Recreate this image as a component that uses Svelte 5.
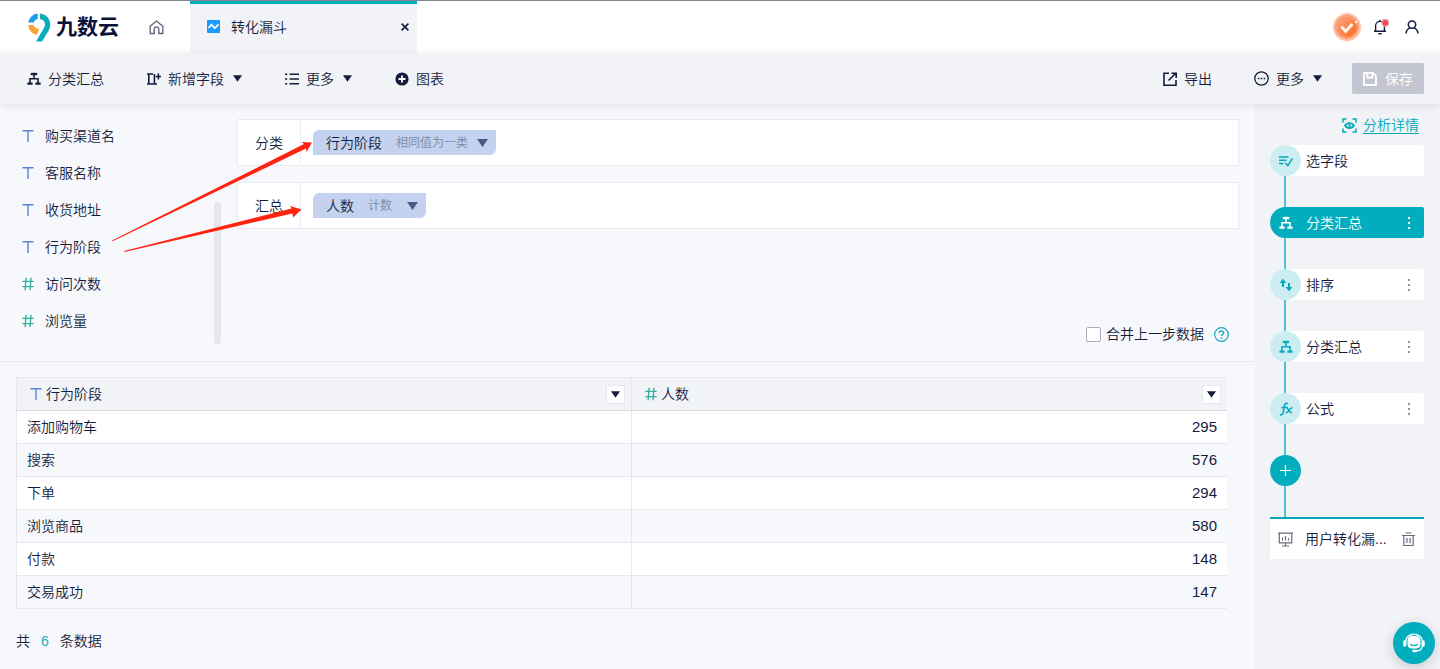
<script>
  const fields = [
    { type: 'text', name: '购买渠道名' },
    { type: 'text', name: '客服名称' },
    { type: 'text', name: '收货地址' },
    { type: 'text', name: '行为阶段' },
    { type: 'number', name: '访问次数' },
    { type: 'number', name: '浏览量' },
  ];
  const rows = [
    ['添加购物车', 295],
    ['搜索', 576],
    ['下单', 294],
    ['浏览商品', 580],
    ['付款', 148],
    ['交易成功', 147],
  ];
  const groups = [
    { label: '分类', name: '行为阶段', mode: '相同值为一类' },
    { label: '汇总', name: '人数', mode: '计数' },
  ];
  const steps = [
    { icon: 'select', name: '选字段', menu: false },
    { icon: 'tree', name: '分类汇总', menu: true, active: true },
    { icon: 'sort', name: '排序', menu: true },
    { icon: 'tree', name: '分类汇总', menu: true },
    { icon: 'fx', name: '公式', menu: true },
  ];
  let merge = $state(false);
</script>

{#snippet caret()}
  <svg class="caret" width="9" height="7" viewBox="0 0 9 7"><path d="M0 .3h9L4.5 6.8z" fill="currentColor" /></svg>
{/snippet}

{#snippet tree()}
  <svg width="14" height="14" viewBox="0 0 14 14" fill="none" stroke="currentColor" stroke-width="1.6">
    <path d="M3.6 2h6.8M7 2v4.5M3 11V6.8h8V11" />
    <path d="M.4 11.7h5.2M8.4 11.7h5.2" stroke-width="2.2" /><path d="M4.3 2h5.4" stroke-width="2.4" />
  </svg>
{/snippet}

{#snippet typeIcon(type)}
  {#if type === 'text'}
    <svg class="type text" width="12" height="14" viewBox="0 0 12 14"><path d="M.5 1.8h11M6 1.8V13" /></svg>
  {:else}
    <svg class="type number" width="12" height="14" viewBox="0 0 12 14"><path d="M.3 4.4h11.4M.3 9.6h11.4M4.1.8l-1 12.4M9 .8l-1 12.4" /></svg>
  {/if}
{/snippet}

<div class="app">
  <header class="top">
    <a class="logo" href="#home">
      <svg width="23" height="29" viewBox="0 0 23 29">
        <path d="M.2 9.6A10.3 10.3 0 0 1 9.7.6v5.5A5 5 0 0 0 5.7 9.6z" fill="#1e9be9" />
        <path d="M.2 12h5.4c.7 2.4 2.6 3.8 5.6 4l-2.6 5.9C3.9 20.8.7 17.2.2 12z" fill="#f7a53b" />
        <path d="M12 .6c6.2.7 10.3 5.2 10.3 11 0 3.3-1.3 5.4-2.6 7.6L14 28.5H8l7.2-12.2c1.1-1.9 1.8-3.2 1.8-5 0-2.5-1.9-4.7-5-5.2z" fill="#0bacb9" />
      </svg>
      <span>九数云</span>
    </a>
    <a class="home" href="#home" aria-label="Home">
      <svg width="15" height="15" viewBox="0 0 15 15" fill="none" stroke="#5b6078" stroke-width="1.3"><path d="M1.2 6.2 7.5 1l6.3 5.2V13.5H9.8V9.2a2.3 2.3 0 0 0-4.6 0v4.3H1.2z" /></svg>
    </a>
    <div class="tab">
      <svg width="13" height="13" viewBox="0 0 13 13"><rect width="13" height="13" rx="1" fill="#1b9bff" /><path d="M1.5 8 4.5 4.5l3.2 3.8L11.500 4.300" fill="none" stroke="#fff" stroke-width="1.7" /></svg>
      <span>转化漏斗</span>
      <button class="close" aria-label="Close">
        <svg width="8" height="8" viewBox="0 0 8 8"><path d="m.6.6 6.8 6.8M7.400.6.6 7.400" stroke="currentColor" stroke-width="1.6" /></svg>
      </button>
    </div>
    <div class="account">
      <svg width="30" height="30" viewBox="0 0 30 30">
        <defs><linearGradient id="medal" x1="0" y1="0" x2="1" y2="1"><stop offset="0" stop-color="#ffa780" /><stop offset="1" stop-color="#f5691f" /></linearGradient></defs>
        <path d="m15 .5 5 1.500 4.500 2.700 3.200 4.300 1.600 5.500-1 5.500-2.800 4.700-4.500 3.300L15 29.500 9 28l-4.500-3.300L1.700 20 .7 14.500 2.300 9l3.200-4.300L10 2z" fill="#fdc6ac" />
        <path d="m15 2.500 4.500 1.200 4 2.600 2.600 4 1.200 4.700-1.200 4.700-2.600 4-4 2.600-4.500 1.200-4.500-1.200-4-2.600-2.600-4L2.700 15l1.200-4.700 2.600-4 4-2.600z" fill="#fb9f78" />
        <circle cx="15" cy="15" r="10" fill="url(#medal)" />
        <path d="m9.5 14.800 4.200 4.400 6.600-7.200" fill="none" stroke="#fff2e9" stroke-width="3" /><circle cx="24" cy="10" r="1.2" fill="#fff" />
      </svg>
      <button aria-label="Notifications">
        <svg width="18" height="18" viewBox="0 0 18 18" fill="none" stroke="#141c3d" stroke-width="1.4">
          <path d="M2 13.200h12M3.600 13V7.800a4.400 4.400 0 0 1 8.800 0V13M8 1.700v1.600M6.300 15.700h3.400" />
          <circle cx="13.3" cy="4.8" r="4" fill="#f6a3a6" stroke="none" /><circle cx="13.3" cy="4.8" r="2.7" fill="#ed4750" stroke="none" />
        </svg>
      </button>
      <button class="user" aria-label="Account">
        <svg width="14" height="14" viewBox="0 0 14 14" fill="none" stroke="#141c3d" stroke-width="1.5"><circle cx="7" cy="4.6" r="3.7" /><path d="M1 13.500c.3-3 1.900-4.900 4-5.600M13 13.500c-.3-3-1.900-4.900-4-5.600" /></svg>
      </button>
    </div>
  </header>

  <nav class="toolbar">
    <button>{@render tree()}分类汇总</button>
    <button>
      <svg width="14" height="14" viewBox="0 0 14 14" fill="none" stroke="currentColor" stroke-width="1.6"><path d="M6 2H1.800v10h5.600V2M0 2h2M0 12h2M8.800 4.500H14M11.400 1.500v6M7 12h3" /></svg>
      新增字段{@render caret()}
    </button>
    <button>
      <svg width="14" height="14" viewBox="0 0 14 14" stroke="currentColor" stroke-width="1.6"><path d="M0 2.300h2.200M0 7h2.200M0 11.700h2.200M4.500 2.300H14M4.500 7H14M4.500 11.700H14" /></svg>
      更多{@render caret()}
    </button>
    <button>
      <svg width="14" height="14" viewBox="0 0 14 14"><circle cx="7" cy="7" r="6.6" fill="currentColor" /><path d="M3.500 7h7M7 3.500v7" stroke="#fff" stroke-width="1.8" /></svg>
      图表
    </button>
    <div class="right">
      <button>
        <svg width="14" height="14" viewBox="0 0 14 14" fill="none" stroke="currentColor" stroke-width="1.6"><path d="M6 1.300H1v11.900h12V8M5.500 8.500l7-7M8.500 1.300h4.700V6" /></svg>
        导出
      </button>
      <button>
        <svg width="15" height="15" viewBox="0 0 15 15" fill="none" stroke="currentColor" stroke-width="1.3"><circle cx="7.5" cy="7.5" r="6.7" /><path d="M3.800 7.500h1.600M6.700 7.500h1.600M9.600 7.500h1.600" stroke-width="1.6" /></svg>
        更多{@render caret()}
      </button>
      <button class="save" disabled>
        <svg width="14" height="14" viewBox="0 0 14 14" fill="none" stroke="currentColor" stroke-width="1.8"><path d="M1 1h9l3 3v9H1zM4.300 1v4.500h5V1.500" /></svg>
        保存
      </button>
    </div>
  </nav>

  <div class="body">
    <main>
      <section class="config">
        <div class="fields">
          <ul>
            {#each fields as field}
              <li>{@render typeIcon(field.type)}{field.name}</li>
            {/each}
          </ul>
          <div class="scroll"></div>
        </div>
        <div class="setup">
          {#each groups as group}
            <div class="group">
              <span class="label">{group.label}</span>
              <div class="drop">
                <button class="tag">{group.name}<small>{group.mode}</small>
                  <svg width="11" height="8" viewBox="0 0 11 8"><path d="M0 0h11L5.500 8z" fill="#4c5a84" /></svg>
                </button>
              </div>
            </div>
          {/each}
          <div class="merge">
            <label><input type="checkbox" bind:checked={merge} />合并上一步数据</label>
            <button aria-label="Help">
              <svg width="15" height="15" viewBox="0 0 15 15" fill="none" stroke="#16abbb" stroke-width="1.2"><circle cx="7.5" cy="7.5" r="6.8" /><path d="M5.400 6.100c0-2.800 4.200-2.700 4.200-.2 0 1.500-2.100 1.500-2.100 3.200M7.500 10.300v1.500" stroke-width="1.4" /></svg>
            </button>
          </div>
        </div>
        <svg class="arrows" width="320" height="160" viewBox="0 100 320 160" fill="#ff2412">
          <path d="M112 240.500 304 144 301.500 142 312 142.500 306.500 152 306 148.500 112.500 241.200z" />
          <path d="M124 251 291.500 208.500 290 206 301.500 209.500 293 217.500 292.500 213.500 124.500 252z" />
        </svg>
      </section>

      <section class="data">
        <table>
          <thead>
            <tr>
              <th><div>{@render typeIcon('text')}行为阶段<button class="filter" aria-label="行为阶段">{@render caret()}</button></div></th>
              <th><div>{@render typeIcon('number')}人数<button class="filter" aria-label="人数">{@render caret()}</button></div></th>
            </tr>
          </thead>
          <tbody>
            {#each rows as [name, count]}
              <tr><td>{name}</td><td class="num">{count}</td></tr>
            {/each}
          </tbody>
        </table>
        <p>共<b>6</b>条数据</p>
      </section>
    </main>

    <aside>
      <a class="detail" href="#detail">
        <svg width="15" height="15" viewBox="0 0 15 15" fill="none" stroke="currentColor" stroke-width="1.5"><path d="M1 4.500V1h3.500M10.500 1H14v3.500M14 10.500V14h-3.500M4.500 14H1v-3.500" /><path d="M3 7.500C5 4.200 10 4.200 12 7.500c-2 3.300-7 3.300-9 0z" stroke-width="1.8" /><circle cx="7.5" cy="7.5" r="1.2" fill="currentColor" stroke="none" /></svg>
        <span>分析详情</span>
      </a>
      <ol>
        {#each steps as step}
          <li class:active={step.active}>
            <span class="dot">
              {#if step.icon === 'select'}
                <svg width="14" height="14" viewBox="0 0 14 14" fill="none" stroke="currentColor" stroke-width="1.5"><path d="M0 3h9.500M0 6.300h7.500M0 9.600h4.500M6.200 9l2.600 2.600L13.500 4.500" /></svg>
              {:else if step.icon === 'tree'}
                {@render tree()}
              {:else if step.icon === 'sort'}
                <svg width="14" height="14" viewBox="0 0 14 14" fill="currentColor"><path d="M4 .8 7.500 5H5v4H3V5H.5zM10 13.200 6.500 9H9V5h2v4h2.500z" /></svg>
              {:else}
                <svg width="14" height="14" viewBox="0 0 14 14" fill="none" stroke="currentColor" stroke-width="1.6"><path d="M8.800 1.800C7 .7 5.900 1.600 5.500 3.500L4 10.800c-.4 1.800-1.500 2.500-3.200 1.700M2.300 5.500H9M7.300 5.700c2-.6 2.300 5.500 5.700 5M13.300 5.600c-2.300 0-3.500 5.300-6.800 5.200" /></svg>
              {/if}
            </span>
            <span class="name">{step.name}</span>
            {#if step.menu}
              <button class="menu" aria-label="Menu"><svg width="4" height="14" viewBox="0 0 4 14" fill="currentColor"><path d="M1 1h2v2H1zM1 6h2v2H1zM1 11h2v2H1z" /></svg></button>
            {/if}
          </li>
          <li class="line" aria-hidden="true"></li>
        {/each}
      </ol>
      <button class="add" aria-label="Add"><svg width="11" height="11" viewBox="0 0 11 11"><path d="M0 5.500h11M5.500 0v11" stroke="#fff" stroke-width="1.2" /></svg></button>
      <div class="line"></div>
      <div class="chart">
        <svg width="15" height="15" viewBox="0 0 15 15" fill="none" stroke="currentColor" stroke-width="1.2"><path d="M0 1.200h15M1.300 1.200v9.600h12.400V1.200M7.500 11v3M4 14h7M4.500 5.500v3M7.500 4v4.500M10.500 6v2.500" /></svg>
        <span>用户转化漏...</span>
        <button aria-label="Delete"><svg width="13" height="15" viewBox="0 0 13 15" fill="none" stroke="currentColor" stroke-width="1.2"><path d="M0 3.500h13M3.500 1h6M1.800 3.500v10h9.400v-10M4.900 6v5M8.100 6v5" /></svg></button>
      </div>
    </aside>
  </div>

  <button class="chat" aria-label="Support">
    <svg width="22" height="22" viewBox="0 0 22 22" fill="none" stroke="#fff">
      <rect x="5" y="4.500" width="12" height="11.500" rx="3.500" fill="#fff" /><path d="M2.800 14V9c0-9 16.400-9 16.400 0v5c0 3.500-2 5-6.500 5" stroke-width="1.300" /><path d="M1.500 9.500v4M20.500 9.500v4M10.500 19h2.500" stroke-width="2.400" stroke-linecap="round" /><path d="M7.200 12.300c1.500 1.700 6.100 1.700 7.600 0" stroke="#05adbf" stroke-width="1.300" />
    </svg>
  </button>
</div>

<style>
  :global(body) { margin: 0; }
  .app { position: relative; display: flex; flex-direction: column; min-height: 100vh; background: #f7f8fb; color: #141c3d; font: 350 14px/20px "Liberation Sans", "Noto Sans CJK SC", sans-serif; }
  button, input { margin: 0; color: inherit; font: inherit; }
  button { display: flex; align-items: center; padding: 0; border: 0; background: none; white-space: nowrap; }
  svg { display: block; flex: none; }
  ul, ol { margin: 0; padding: 0; list-style: none; }
  a { color: inherit; text-decoration: none; }

  .top { display: flex; align-items: stretch; height: 52px; border-top: 1px solid #85868b; background: #fff; }
  .logo { display: flex; align-items: center; gap: 5px; width: 121px; padding-left: 28px; color: #0b103b; font-size: 21px; font-weight: 700; line-height: 28px; }
  .home { display: flex; align-items: center; width: 41px; }
  .tab { display: flex; align-items: center; gap: 11px; width: 227px; box-sizing: border-box; padding: 0 8px 4px 17px; border-top: 3px solid #02adbd; background: #f2f3f7; }
  .close { margin-left: auto; }
  .account { display: flex; align-items: center; gap: 10px; margin-left: auto; padding-right: 21px; }
  .user { margin-left: 5px; }

  .toolbar { position: relative; z-index: 1; display: flex; align-items: center; gap: 43px; height: 51px; padding: 0 16px 0 27px; background: #f2f3f7; box-shadow: 0 2px 8px rgba(20, 28, 61, 0.09); }
  .toolbar button { gap: 7px; }
  .toolbar .caret { margin-left: 2px; }
  .right { display: flex; align-items: center; gap: 42px; margin-left: auto; }
  .toolbar .save { justify-content: center; gap: 8px; width: 72px; height: 31px; margin-left: -12px; border-radius: 2px; background: #c4c6d2; color: #fff; }

  .body { display: flex; flex: 1; }
  main { flex: 1; min-width: 0; }
  .config { position: relative; display: flex; height: 257px; border-bottom: 1px solid #e9ebf0; }
  .fields { display: flex; justify-content: space-between; width: 221px; box-sizing: border-box; padding: 13px 0 0 22px; }
  .fields li { display: flex; align-items: center; gap: 11px; height: 37px; }
  .type { fill: none; stroke-width: 1.4; }
  .type.text { stroke: #5b84d6; }
  .type.number { stroke: #36b29f; }
  .scroll { width: 7px; height: 142px; margin-top: 85px; border-radius: 4px; background: #e6e7eb; }
  .setup { display: flex; flex: 1; flex-direction: column; gap: 16px; padding: 15px 16px 17px; }
  .group { display: flex; height: 45px; border: 1px solid #e9ebf0; background: #fff; }
  .label { display: flex; align-items: center; justify-content: center; width: 62px; border-right: 1px solid #e9ebf0; }
  .drop { display: flex; align-items: center; padding-left: 12px; }
  .tag { height: 25px; padding: 0 8px 0 13px; border-radius: 6px 0; background: #c3d2ef; }
  .tag small { min-width: 30px; margin: 0 9px 0 14px; color: #7b88a8; font-size: 12px; text-align: left; }
  .merge { display: flex; align-items: center; justify-content: flex-end; gap: 10px; margin-top: auto; padding-right: 10px; }
  .merge label { display: flex; align-items: center; gap: 5px; }
  .merge input { appearance: none; box-sizing: border-box; width: 15px; height: 15px; border: 1px solid #a9adbf; border-radius: 2px; background: #fff; }
  .merge input:checked { background: #02adbd; }
  .arrows { position: absolute; top: -4px; left: 0; z-index: 2; pointer-events: none; }

  .data { padding: 15px 28px 0 16px; }
  table { width: 100%; border-collapse: collapse; table-layout: fixed; }
  th, td { box-sizing: border-box; height: 33px; padding: 0 10px; border: 1px solid #e6e8ee; border-right: 0; font-weight: inherit; text-align: left; }
  th { background: #f2f3f7; border-bottom-color: #d7dae2; }
  th:first-child { width: 50.8%; }
  th div { display: flex; align-items: center; gap: 4px; padding-left: 3px; }
  .filter { justify-content: center; width: 19px; height: 19px; margin: 0 -4px 0 auto; border: 1px solid #e6e8ee; background: #fff; }
  tbody tr:nth-child(odd) { background: #fff; }
  .num { font-size: 15px; text-align: right; }
  p { display: flex; gap: 11px; margin: 22px 0 0; }
  b { color: #17adbd; font-weight: inherit; }

  aside { display: flex; flex-direction: column; width: 154px; padding: 11px 16px 0 15px; background: #f2f3f7; }
  .detail { display: flex; align-items: center; gap: 6px; align-self: flex-end; margin: 0 5px 10px 0; color: #02a9bb; }
  .detail span { text-decoration: underline; text-underline-offset: 3px; }
  ol li { display: flex; align-items: center; height: 31px; border-radius: 16px 2px 2px 16px; background: #fff; }
  .dot { display: flex; align-items: center; justify-content: center; width: 31px; height: 31px; border-radius: 50%; background: #cceef2; color: #06aabc; }
  .name { flex: 1; padding-left: 5px; }
  .menu { margin-right: 13px; color: #8f93a5; }
  ol .active { background: #02adbd; color: #fff; }
  .active .dot { background: none; color: #fff; }
  .active .menu { color: #fff; }
  .line, ol .line { width: 2px; height: 31px; margin-left: 14px; border-radius: 0; background: #4fc3ce; }
  .add { justify-content: center; width: 31px; height: 31px; border-radius: 50%; background: #02adbd; }
  .chart { display: flex; align-items: center; height: 40px; padding: 0 9px 0 8px; border-top: 2px solid #02a6b6; background: #fff; }
  .chart > svg, .chart button { color: #666b82; }
  .chart span { flex: 1; margin-left: 12px; white-space: nowrap; }
  .chat { position: absolute; right: 5px; bottom: 5px; justify-content: center; width: 42px; height: 42px; border-radius: 50%; background: #02adbd; box-shadow: 0 3px 12px rgba(20, 28, 61, 0.2); }
</style>
